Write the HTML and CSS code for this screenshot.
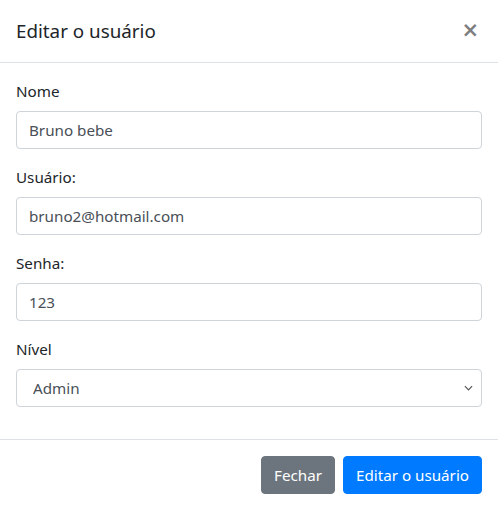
FILE: index.html
```html
<!DOCTYPE html>
<html lang="pt-BR">
<head>
<meta charset="utf-8">
<title>Editar o usuário</title>
<link rel="stylesheet" href="styles.css">
</head>
<body>
<div class="modal-content">
  <div class="modal-header">
    <h5 class="modal-title">Editar o usuário</h5>
    <button type="button" class="close" aria-label="Close"><span>&times;</span></button>
  </div>
  <form class="modal-body">
    <div class="form-group">
      <label class="label">Nome</label>
      <input class="form-control" type="text" value="Bruno bebe">
    </div>
    <div class="form-group">
      <label class="label">Usuário:</label>
      <input class="form-control" type="text" value="bruno2@hotmail.com">
    </div>
    <div class="form-group">
      <label class="label">Senha:</label>
      <input class="form-control" type="text" value="123">
    </div>
    <div class="form-group">
      <label class="label">Nível</label>
      <select class="form-control select">
        <option>Admin</option>
        <option>Usuário</option>
      </select>
    </div>
  </form>
  <div class="modal-footer">
    <button type="button" class="btn btn-secondary">Fechar</button>
    <button type="button" class="btn btn-primary">Editar o usuário</button>
  </div>
</div>
</body>
</html>
```
FILE: styles.css
```css
* { box-sizing: border-box; }
html, body {
  margin: 0;
  padding: 0;
  background: #fff;
}
body {
  font-family: "Noto Sans", "Open Sans", sans-serif;
  font-size: 15.2px;
  line-height: 24px;
  color: #212529;
  width: 498px;
  height: 510px;
  overflow: hidden;
}
.modal-content {
  display: flex;
  flex-direction: column;
  width: 498px;
  height: 510px;
  background: #fff;
}
.modal-header {
  display: flex;
  align-items: flex-start;
  justify-content: space-between;
  padding: 16px;
  border-bottom: 1px solid #dee2e6;
}
.modal-title {
  margin: 0;
  font-size: 18.8px;
  font-weight: 400;
  line-height: 30px;
}
.close {
  padding: 16px 19px 16px 16px;
  margin: -12px -16px -16px auto;
  background: transparent;
  border: 0;
  font-family: "DejaVu Sans", sans-serif;
  font-size: 21px;
  font-weight: 700;
  line-height: 1;
  color: #000;
  opacity: .5;
  cursor: pointer;
}
.modal-body {
  padding: 16px;
  margin: 0;
  display: flex;
  flex-direction: column;
}
.form-group {
  display: flex;
  flex-direction: column;
  margin-bottom: 16px;
}
.label {
  margin-bottom: 8px;
}
.form-control {
  display: block;
  width: 100%;
  height: 38px;
  padding: 6px 12px;
  font-family: inherit;
  font-size: 15.2px;
  line-height: 24px;
  color: #495057;
  background: #fff;
  border: 1px solid #ced4da;
  border-radius: 4px;
  margin: 0;
}
.select {
  padding: 6px 12px 6px 16px;
  -webkit-appearance: none;
  appearance: none;
  background-image: url("data:image/svg+xml,%3Csvg xmlns='http://www.w3.org/2000/svg' width='10' height='6' viewBox='0 0 10 6'%3E%3Cpath d='M1 1l4 4 4-4' fill='none' stroke='%23555' stroke-width='1.3'/%3E%3C/svg%3E");
  background-repeat: no-repeat;
  background-position: right 8px center;
  background-size: 9px 6px;
}
.modal-footer {
  display: flex;
  align-items: center;
  justify-content: flex-end;
  padding: 12px;
  border-top: 1px solid #dee2e6;
  margin-top: auto;
}
.btn {
  margin: 4px;
  height: 38px;
  padding: 6px 12px;
  font-family: inherit;
  font-size: 15.2px;
  line-height: 24px;
  border: 1px solid transparent;
  border-radius: 4px;
  color: #fff;
  cursor: pointer;
}
.btn-secondary {
  background: #6c757d;
  border-color: #6c757d;
}
.btn-primary {
  background: #007bff;
  border-color: #007bff;
}
```
